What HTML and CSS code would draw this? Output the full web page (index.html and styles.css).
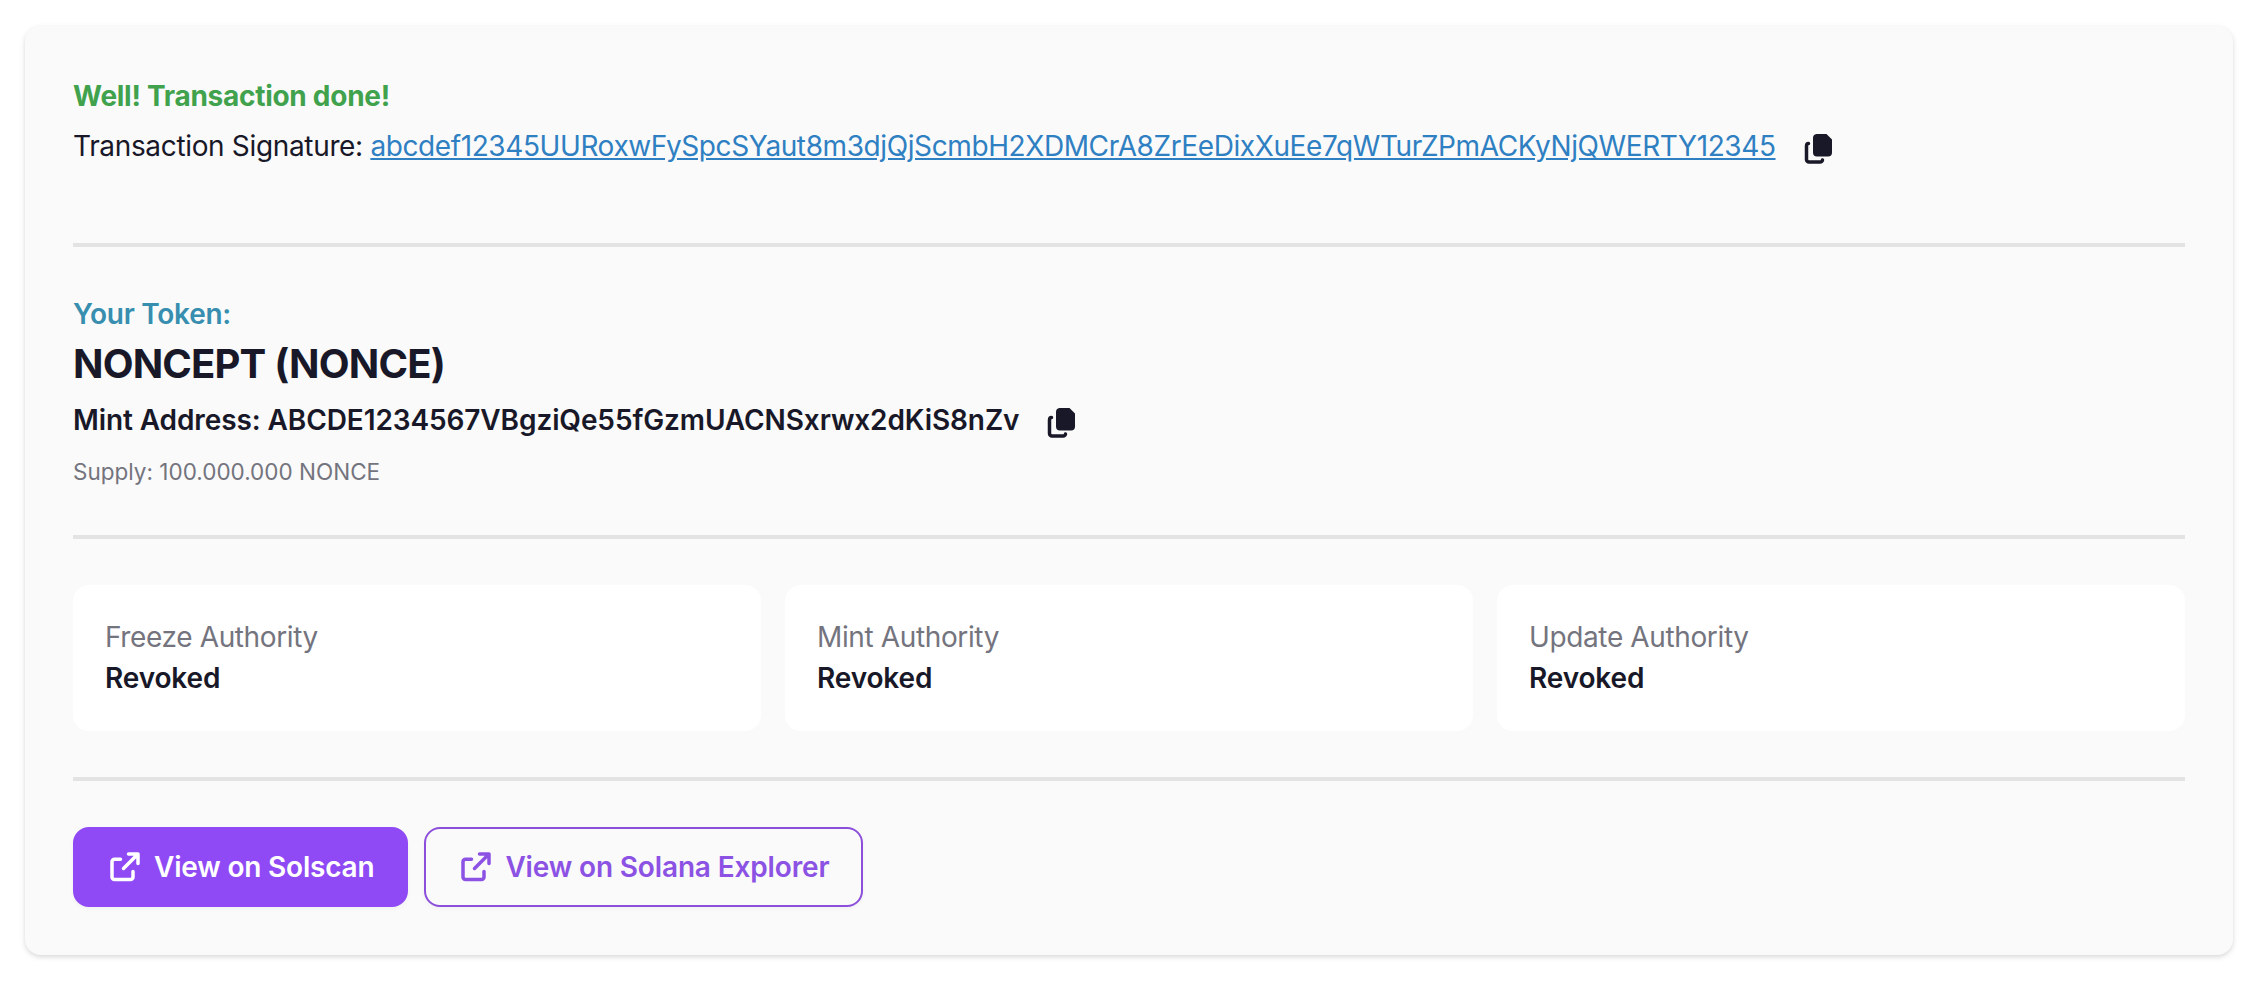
FILE: index.html
```
<!DOCTYPE html>
<html lang="en">
<head>
    <meta charset="UTF-8">
    <meta name="viewport" content="width=device-width, initial-scale=1.0">
    <title>Transaction done</title>
    <link rel="stylesheet" href="styles.css">
</head>
<body>
    <div class="card">
        <div class="transaction">
            <p class="success">Well! Transaction done!</p>
            <div class="row signature">
                <p>Transaction Signature: <a href="#"><span class="hash">abcdef12345UURoxwFySpcSYaut8m3djQjScmbH2XDMCrA8ZrEeDixXuEe7qWTurZPmACKyNjQWERTY12345</span></a></p>
                <svg class="copy" viewBox="0 0 28 32"><path d="M12.500 1H22.500L28 6.500V19.500a4 4 0 0 1-4 4H13a4 4 0 0 1-4-4V5a4 4 0 0 1 3.500-4z"/><path class="back" d="M4.500 10.500C3 10.500 2.500 11.500 2.500 13V26.500a2.500 2.500 0 0 0 2.500 2.500H16a2.500 2.500 0 0 0 2.500-2"/></svg>
            </div>
        </div>
        <hr>
        <div class="token">
            <p class="label">Your Token:</p>
            <h1>NONCEPT (NONCE)</h1>
            <div class="row mint">
                <p><span class="address">Mint Address: ABCDE1234567VBgziQe55fGzmUACNSxrwx2dKiS8nZv</span></p>
                <svg class="copy" viewBox="0 0 28 32"><path d="M12.500 1H22.500L28 6.500V19.500a4 4 0 0 1-4 4H13a4 4 0 0 1-4-4V5a4 4 0 0 1 3.500-4z"/><path class="back" d="M4.500 10.500C3 10.500 2.500 11.500 2.500 13V26.500a2.500 2.500 0 0 0 2.500 2.500H16a2.500 2.500 0 0 0 2.500-2"/></svg>
            </div>
            <p class="supply">Supply: 100.000.000 NONCE</p>
        </div>
        <hr>
        <div class="authorities">
            <div class="authority"><p>Freeze Authority</p><strong>Revoked</strong></div>
            <div class="authority"><p>Mint Authority</p><strong>Revoked</strong></div>
            <div class="authority"><p>Update Authority</p><strong>Revoked</strong></div>
        </div>
        <hr>
        <div class="actions">
            <a class="btn btn-primary" href="#">
                <svg class="external" viewBox="0 0 30 30"><path d="M10.500 7.300H4.500a2.500 2.500 0 0 0-2.500 2.500V25a2.500 2.500 0 0 0 2.500 2.500H20.500a2.500 2.500 0 0 0 2.500-2.500V19.500M13.500 16.500 27.500 2.500M18.500 2H28V11.500"/></svg>
                <span>View on Solscan</span>
            </a>
            <a class="btn btn-outline" href="#">
                <svg class="external" viewBox="0 0 30 30"><path d="M10.500 7.300H4.500a2.500 2.500 0 0 0-2.500 2.500V25a2.500 2.500 0 0 0 2.500 2.500H20.500a2.500 2.500 0 0 0 2.500-2.500V19.500M13.500 16.500 27.500 2.500M18.500 2H28V11.500"/></svg>
                <span>View on Solana Explorer</span>
            </a>
        </div>
    </div>
</body>
</html>
```
FILE: styles.css
```
* { box-sizing: border-box; }
body { margin: 0; padding: 26px 25px 29px; background: #fff; font-family: Inter, sans-serif; font-size: 28px; line-height: 42px; color: #181828; }
p, h1 { margin: 0; }
.card { height: 929px; padding: 48px; background: #fafafa; border-radius: 16px; box-shadow: 0 2px 6px rgba(0, 0, 0, 0.1), 0 2px 4px rgba(0, 0, 0, 0.06); }
hr { height: 4px; margin: 0; border: 0; background: #e3e3e3; }

.row { display: flex; align-items: center; white-space: nowrap; }
.row a { color: #2f80c2; text-decoration: underline; }
.copy { width: 28px; height: 32px; margin-left: 28px; margin-top: 6px; fill: #181828; }
.copy .back { fill: none; stroke: #181828; stroke-width: 3.500; stroke-linecap: round; }

.transaction { height: 169px; padding-top: 1px; }
.success { color: #41a24d; font-weight: 650; letter-spacing: -0.28px; }
.signature { margin-top: 8px; letter-spacing: -0.34px; }
.hash { letter-spacing: -0.4px; }

.token { height: 288px; padding-top: 46px; }
.label { color: #378eaf; font-weight: 600; letter-spacing: -0.26px; }
h1 { margin-top: -1px; font-size: 40px; line-height: 60px; font-weight: 700; letter-spacing: -0.83px; }
.mint { font-weight: 600; margin-top: 5px; letter-spacing: -0.1px; }
.supply { margin-top: 14px; font-size: 22.5px; line-height: 33px; color: #74747e; }

.authorities { display: grid; grid-template-columns: repeat(3, 1fr); gap: 24px; margin: 46px 0; }
.authority { height: 146px; padding: 32px; background: #fff; border-radius: 16px; line-height: 41px; }
.authority p { color: #74747e; letter-spacing: -0.37px; }
.authority strong { font-weight: 600; letter-spacing: -0.15px; }

.actions { display: flex; gap: 16px; margin-top: 46px; }
.btn { display: flex; align-items: center; height: 80px; padding: 0 32px 0 35px; border: 2px solid #8b4fdb; border-radius: 16px; font-weight: 600; letter-spacing: -0.2px; text-decoration: none; white-space: nowrap; box-shadow: 0 2px 4px rgba(0, 0, 0, 0.04); }
.btn-primary { color: #fff; background: #8f4af5; border-color: #8f4af5; }
.btn-outline { color: #8c52e4; letter-spacing: -0.15px; }
.external { width: 30px; height: 30px; margin-right: 14px; fill: none; stroke: currentColor; stroke-width: 3.500; stroke-linecap: round; stroke-linejoin: round; }
```
